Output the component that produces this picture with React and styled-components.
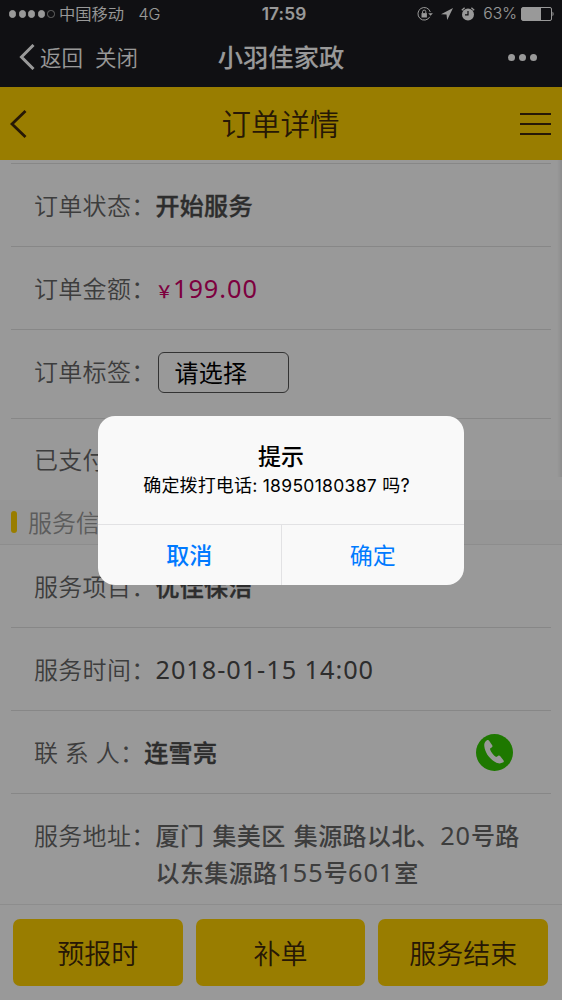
import React from 'react';
import styled, { createGlobalStyle } from 'styled-components';

const orderRows = [
	{ label: '订单状态：', value: '开始服务', bold: true, height: 83 },
	{ label: '订单金额：', price: '199.00', height: 83 },
	{ label: '订单标签：', select: '请选择', height: 89, lift: 6 },
	{ label: '已支付：', value: '', height: 81, lift: 0 }
];

const serviceRows = [
	{ label: '服务项目：', value: '优佳保洁', bold: true, height: 83 },
	{ label: '服务时间：', number: '2018-01-15 14:00', height: 83 },
	{ label: '联 系 人：', value: '连雪亮', bold: true, phone: true, height: 83 }
];

const actions = ['预报时', '补单', '服务结束'];

const StatusBar = () => (
	<Status>
		<Signal>
			<Dot /><Dot /><Dot /><Dot /><Dot $empty />
			<Carrier>中国移动</Carrier>
			<Network>4G</Network>
		</Signal>
		<Clock>17:59</Clock>
		<StatusRight>
			<svg width="16" height="16" viewBox="0 0 16 16" fill="none" stroke="#fff">
				<path d="M12.8 10.8A6.3 6.3 0 1 1 13.3 6" />
				<path d="M11.2 7.2h4.7l-2.3 2.6z" fill="#fff" stroke="none" />
				<path d="M4.5 7.1h5.4v4.4H4.5z" fill="#fff" stroke="none" />
				<path d="M5.6 7.2V5.7a1.6 1.6 0 0 1 3.2 0v1.5" />
			</svg>
			<svg width="12" height="12" viewBox="0 0 12 12" fill="#fff">
				<path d="M12 0L0 6.2l5.5.3.7 5.5z" />
			</svg>
			<svg width="14" height="14" viewBox="0 0 14 14" fill="#fff">
				<circle cx="7" cy="7.5" r="6" />
				<path d="M.8 3.2L3.6.8M13.2 3.2L10.4.8" stroke="#fff" strokeWidth="1.3" />
				<path d="M7 4v3.9H4" fill="none" stroke="#1c1c20" strokeWidth="1.2" />
			</svg>
			<Percent>63%</Percent>
			<svg width="33" height="14" viewBox="0 0 33 14">
				<rect x=".5" y=".5" width="30" height="13" rx="1.5" fill="none" stroke="#fff" />
				<rect x="1" y="1" width="19" height="12" fill="#fff" />
				<path d="M31.5 4.8c1.4.5 1.4 3.9 0 4.4z" fill="#fff" />
			</svg>
		</StatusRight>
	</Status>
);

const Row = ({ row }) => (
	<RowWrapper $height={row.height}>
		<Label $lift={row.lift}>{row.label}</Label>
		{row.value && <Value $bold={row.bold}>{row.value}</Value>}
		{row.number && <NumberText>{row.number}</NumberText>}
		{row.price && <Price><small>￥</small>{row.price}</Price>}
		{row.select && <Select>{row.select}</Select>}
		{row.phone && (
			<PhoneButton>
				<svg width="37" height="37" viewBox="0 0 37 37">
					<circle cx="18.5" cy="18.5" r="18.5" fill="#32c800" />
					<path d="M9.5 7.6C10.6 6 12.4 5.5 13.3 6.9l2.9 4.3c.6 1 .3 1.7-.6 2.3l-1.5 1.1c-.4 2.200 3.6 7.3 6 8.3l1.9-1c.9-.5 1.6-.4 2.3.4l3.1 3.9c.8 1.1.5 1.8-.6 2.4-2.6 1.4-5.8.9-8.5-1.2C12.5 23.9 9 18 8.3 12.3c-.2-2 .2-3.6 1.2-4.7z" fill="#fff" />
				</svg>
			</PhoneButton>
		)}
	</RowWrapper>
);

const Dialog = () => (
	<Mask>
		<DialogBox>
			<DialogBody>
				<DialogTitle>提示</DialogTitle>
				<DialogText>确定拨打电话: <em>18950180387</em> 吗?</DialogText>
			</DialogBody>
			<DialogFooter>
				<DialogButton $bold>取消</DialogButton>
				<DialogButton>确定</DialogButton>
			</DialogFooter>
		</DialogBox>
	</Mask>
);

const App = () => (
	<Page>
		<GlobalStyle />
		<TopBar>
			<StatusBar />
			<NavBar>
				<NavLeft>
					<svg width="16" height="26" viewBox="0 0 16 26" fill="none" stroke="#fff" strokeWidth="3">
						<path d="M14.5 1L2.5 13l12 12" />
					</svg>
					<span>返回</span>
					<span>关闭</span>
				</NavLeft>
				<NavTitle>小羽佳家政</NavTitle>
				<More><i /><i /><i /></More>
			</NavBar>
		</TopBar>
		<Header>
			<svg width="17" height="28" viewBox="0 0 17 28" fill="none" stroke="#40280a" strokeWidth="2.8">
				<path d="M15.5 1L2 14l13.5 13" />
			</svg>
			<HeaderTitle>订单详情</HeaderTitle>
			<Menu><i /><i /><i /></Menu>
		</Header>
		<Content>
			<List $top>
				{orderRows.map((row) => <Row key={row.label} row={row} />)}
			</List>
			<SectionTitle><span>服务信息</span></SectionTitle>
			<List>
				{serviceRows.map((row) => <Row key={row.label} row={row} />)}
				<AddressRow>
					<Label>服务地址：</Label>
					<Address>
						厦门 集美区 集源路以北、<em>20</em>号路<br />
						以东集源路<em>155</em>号<em>601</em>室
					</Address>
				</AddressRow>
			</List>
			<ScrollShade />
		</Content>
		<Footer>
			{actions.map((text) => <ActionButton key={text}>{text}</ActionButton>)}
		</Footer>
		<Dialog />
	</Page>
);

export default App;

const GlobalStyle = createGlobalStyle`
	body {
		margin: 0;
		background: #fff;
	}
	* {
		box-sizing: border-box;
	}
`;

const Page = styled.div`
	width: 562px;
	height: 1000px;
	display: flex;
	flex-direction: column;
	overflow: hidden;
	position: relative;
	background: #fff;
	color: #666;
	font-family: "Noto Sans", "Noto Sans CJK SC", sans-serif;
	font-size: 24px;
`;

const TopBar = styled.div`
	height: 87px;
	flex: none;
	background: #1c1c20;
	color: #fff;
	font-family: Inter, "Noto Sans CJK SC", sans-serif;
`;

const Status = styled.div`
	height: 28px;
	display: grid;
	grid-template-columns: 1fr auto 1fr;
	align-items: center;
	padding: 0 9px;
	font-size: 16px;
	line-height: 28px;
`;

const Signal = styled.div`
	display: flex;
	align-items: center;
	gap: 2.3px;
`;

const Dot = styled.i`
	width: 7.3px;
	height: 7.3px;
	border-radius: 50%;
	background: ${props => props.$empty ? 'transparent' : '#fff'};
	border: 1px solid ${props => props.$empty ? '#aaa' : '#fff'};
`;

const Carrier = styled.span`
	margin-left: 2px;
	font-size: 16.3px;
	font-weight: 350;
`;

const Network = styled.span`
	margin-left: 12px;
	font-weight: 350;
`;

const Clock = styled.span`
	margin-left: 6px;
	font-size: 17.3px;
	font-weight: 600;
	letter-spacing: 0.1px;
`;

const StatusRight = styled.div`
	display: flex;
	justify-content: flex-end;
	align-items: center;
	gap: 8px;
	margin-right: -1px;
`;

const Percent = styled.span`
	margin-right: -4px;
	font-size: 15.7px;
	font-weight: 350;
`;

const NavBar = styled.div`
	height: 59px;
	display: grid;
	grid-template-columns: 1fr auto 1fr;
	align-items: center;
	padding: 0 25px 1px 19px;
`;

const NavLeft = styled.div`
	display: flex;
	align-items: center;
	font-size: 21.5px;
	font-weight: 350;

	span {
		margin-left: 5px;
		padding-bottom: 1px;
	}
	span + span {
		margin-left: 12px;
	}
`;

const NavTitle = styled.div`
	font-size: 25.3px;
	font-weight: 500;
	padding-bottom: 3px;
	margin-right: -6px;
`;

const More = styled.div`
	display: flex;
	justify-content: flex-end;
	gap: 4px;

	i {
		width: 7px;
		height: 7px;
		border-radius: 50%;
		background: #fff;
	}
`;

const Header = styled.div`
	height: 73px;
	flex: none;
	display: grid;
	grid-template-columns: 1fr auto 1fr;
	align-items: center;
	padding: 0 11px 0 10px;
	background: #ffd100;
	color: #40280a;
`;

const HeaderTitle = styled.div`
	padding-bottom: 3px;
	font-size: 29.5px;
	font-weight: 350;
`;

const Menu = styled.div`
	display: flex;
	flex-direction: column;
	align-items: flex-end;
	gap: 8px;

	i {
		width: 31px;
		height: 2px;
		background: #40280a;
	}
`;

const Content = styled.div`
	height: 744px;
	flex: none;
	position: relative;
	padding-top: 3px;
`;

const List = styled.div`
	margin: 0 11px;
	border-top: ${props => props.$top ? '1px solid #e2e2e2' : '0'};
`;

const RowWrapper = styled.div`
	height: ${props => props.$height}px;
	display: flex;
	align-items: center;
	padding: 0 38px 0 23px;
	border-bottom: 1px solid ${props => props.$height === 81 ? 'transparent' : '#e2e2e2'};
`;

const Label = styled.span`
	padding-bottom: ${props => 2 + (props.$lift || 0)}px;
	font-size: 24px;
	font-weight: 350;
	letter-spacing: 0.3px;
	white-space: nowrap;
`;

const Value = styled.span`
	padding-bottom: 2px;
	color: #4c4c4c;
	letter-spacing: 0.3px;
	font-weight: ${props => props.$bold ? 500 : 400};
	-webkit-text-stroke: ${props => props.$bold ? '0.4px' : 0};
`;

const NumberText = styled.span`
	padding-bottom: 1px;
	color: #4c4c4c;
	font-size: 25.3px;
	letter-spacing: 0.95px;
`;

const Price = styled.span`
	padding-bottom: 1px;
	color: #d0006a;
	font-size: 25.3px;
	letter-spacing: 0.95px;

	small {
		font-size: 17.5px;
		font-weight: 500;
		letter-spacing: 0;
	}
`;

const Select = styled.span`
	width: 131px;
	height: 41px;
	line-height: 39px;
	margin: 0 0 3px 2px;
	padding-left: 16px;
	border: 1px solid #555;
	border-radius: 6px;
	color: #000;
	letter-spacing: 0.3px;
`;

const PhoneButton = styled.span`
	margin-left: auto;
	height: 37px;
	line-height: 0;
`;

const SectionTitle = styled.div`
	height: 45px;
	display: flex;
	align-items: center;
	padding-left: 11px;
	background: #fafafa;
	border-bottom: 1px solid #ebebeb;
	color: #999;
	font-weight: 350;

	span {
		padding-bottom: 1px;
	}

	&::before {
		content: '';
		width: 6px;
		height: 22px;
		margin-right: 11px;
		border-radius: 3px;
		background: #ffd100;
	}
`;

const AddressRow = styled.div`
	display: flex;
	padding: 23px 0 0 23px;
	line-height: 37px;
`;

const Address = styled.div`
	font-weight: 500;
	letter-spacing: 0.4px;
	word-spacing: 1.5px;
	white-space: nowrap;

	em {
		font-style: normal;
		font-weight: 400;
		font-size: 25.3px;
		letter-spacing: 0.9px;
	}
`;

const ScrollShade = styled.div`
	position: absolute;
	top: 0;
	right: 0;
	width: 5px;
	height: 317px;
	background: linear-gradient(to right, rgba(0, 0, 0, 0), rgba(0, 0, 0, 0.08));
`;

const Footer = styled.div`
	flex: 1;
	display: flex;
	gap: 13px;
	padding: 14px 14px 14px 13px;
	border-top: 1px solid #ebebeb;
`;

const ActionButton = styled.div`
	flex: 1;
	display: flex;
	justify-content: center;
	align-items: center;
	height: 67px;
	border-radius: 7px;
	background: #ffd100;
	color: #40280a;
	font-size: 27px;
	font-weight: 350;
`;

const Mask = styled.div`
	position: absolute;
	top: 0;
	left: 0;
	width: 100%;
	height: 100%;
	display: flex;
	justify-content: center;
	align-items: center;
	background: rgba(0, 0, 0, 0.4);
`;

const DialogBox = styled.div`
	width: 366px;
	height: 169px;
	border-radius: 17px;
	overflow: hidden;
	background: #f9f9f9;
	color: #000;
	text-align: center;
`;

const DialogBody = styled.div`
	height: 108px;
	padding-top: 24px;
`;

const DialogTitle = styled.div`
	font-size: 23px;
	line-height: 33px;
	font-weight: 500;
`;

const DialogText = styled.div`
	margin-left: -9px;
	font-family: Inter, "Noto Sans CJK SC", sans-serif;
	font-size: 18px;
	line-height: 26px;
	letter-spacing: 0.15px;

	em {
		font-style: normal;
		font-size: 17.5px;
		letter-spacing: 0.3px;
	}
`;

const DialogFooter = styled.div`
	height: 61px;
	display: flex;
	border-top: 1px solid #e2e2e4;
`;

const DialogButton = styled.div`
	flex: 1;
	line-height: 60px;
	font-size: 23px;
	color: #007aff;
	font-weight: ${props => props.$bold ? 500 : 400};

	& + & {
		border-left: 1px solid #e2e2e4;
	}
`;
